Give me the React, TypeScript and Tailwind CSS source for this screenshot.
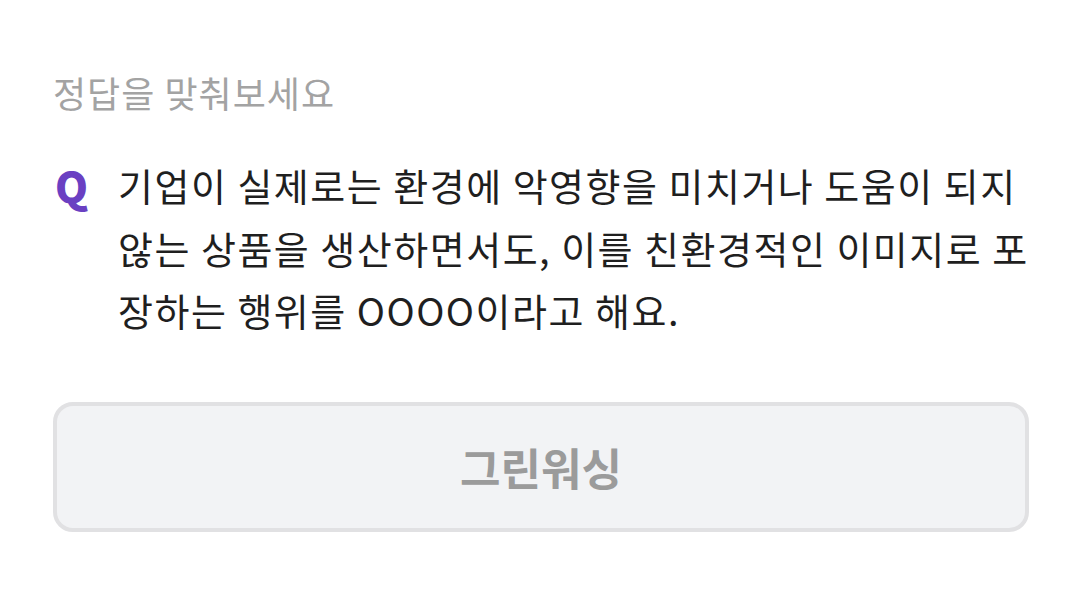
export default function App() {
  return (
    <div
      className="w-[1080px] h-[591px] bg-white pt-[72px] pl-[53px] pr-[51px]"
      style={{ fontFamily: '"Noto Sans CJK KR", "Noto Sans", sans-serif' }}
    >
      <div className="text-[36px] leading-[40px] tracking-[1px] text-[#a3a3a3]">정답을 맞춰보세요</div>

      <div className="flex mt-[42px]">
        <div className="w-[65px] shrink-0 pl-[2px] text-[42px] leading-[62px] font-black text-[#6a40c2]">Q</div>
        <p className="flex-1 text-[38px] leading-[62.5px] tracking-[1.5px] text-[#1f1f1f]">
          기업이 실제로는 환경에 악영향을 미치거나 도움이 되지 않는 상품을 생산하면서도, 이를 친환경적인 이미지로 포장하는 행위를 OOOO이라고 해요.
        </p>
      </div>

      <div className="mt-[60px] h-[130px] rounded-[20px] border-4 border-[#e1e1e3] bg-[#f2f3f5] flex items-center justify-center">
        <span className="text-[44px] font-bold text-[#9b9b9b]">그린워싱</span>
      </div>
    </div>
  );
}
